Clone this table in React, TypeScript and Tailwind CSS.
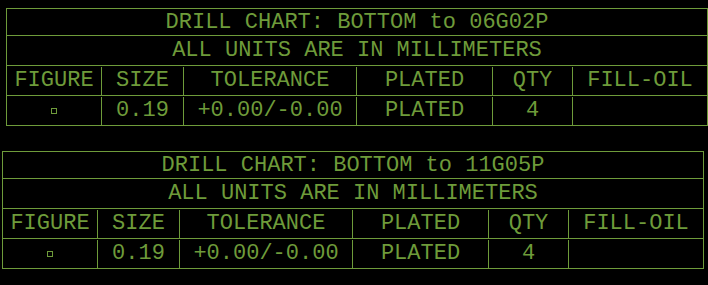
const cols = ['w-[94px]', 'w-[82px]', 'w-[173px]', 'w-[136px]', 'w-[80px]', 'w-[135px]'];

interface DrillChartProps {
  target: string;
  offset: string;
}

const Cell = ({ i, children }: { i: number; children?: React.ReactNode }) => (
  <div
    className={`${cols[i]} flex items-center justify-center ${i > 0 ? 'border-l border-[#6e9b3a]' : ''}`}
  >
    {children}
  </div>
);

const DrillChart = ({ target, offset }: DrillChartProps) => {
  const header = ['FIGURE', 'SIZE', 'TOLERANCE', 'PLATED', 'QTY', 'FILL-OIL'];

  return (
    <div className={`${offset} w-[702px] border border-[#6e9b3a]`}>
      <div className="h-[26px] pt-[2px] flex items-center justify-center">
        <span>DRILL CHART: BOTTOM to {target}</span>
      </div>
      <div className="h-[30px] pt-[1px] border-t border-[#6e9b3a] flex items-center justify-center">
        <span>ALL UNITS ARE IN MILLIMETERS</span>
      </div>
      <div className="h-[30px] pt-[1px] border-t border-[#6e9b3a] flex">
        {header.map((h, i) => (
          <Cell key={h} i={i}>
            {h}
          </Cell>
        ))}
      </div>
      <div className="h-[30px] pt-[1px] border-t border-[#6e9b3a] flex">
        <Cell i={0}>
          <div className="w-[6px] h-[6px] border border-[#6e9b3a]" />
        </Cell>
        <Cell i={1}>0.19</Cell>
        <Cell i={2}>+0.00/-0.00</Cell>
        <Cell i={3}>PLATED</Cell>
        <Cell i={4}>4</Cell>
        <Cell i={5} />
      </div>
    </div>
  );
};

export default function App() {
  return (
    <div
      className="w-[708px] h-[285px] bg-black text-[#6e9b3a] text-[22px] leading-none tracking-[0px] overflow-hidden"
      style={{ fontFamily: '"Liberation Mono", monospace' }}
    >
      <DrillChart target="06G02P" offset="ml-[6px] mt-[8px]" />
      <DrillChart target="11G05P" offset="ml-[2px] mt-[25px]" />
    </div>
  );
}
